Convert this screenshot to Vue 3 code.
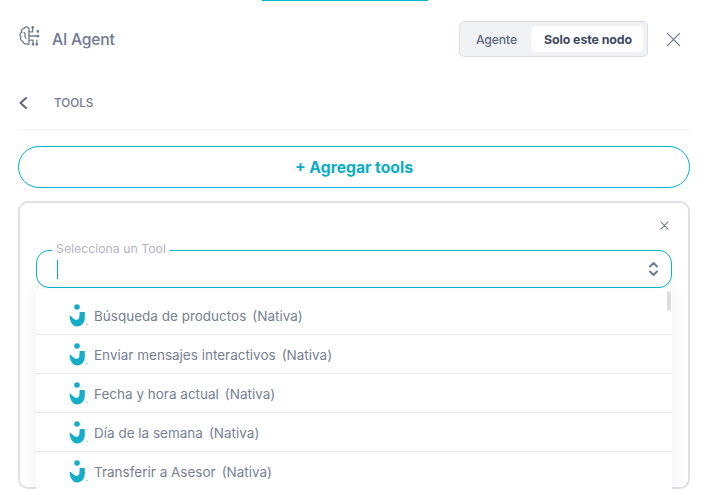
<template>
  <div class="panel">
    <div class="top-strip"></div>

    <header class="header">
      <div class="title-wrap">
        <svg class="brain" viewBox="0 0 24 24" fill="none" stroke="#6f7a90" stroke-width="1.4" stroke-linecap="round" stroke-linejoin="round">
          <path d="M11.5 3.2C10 1.2 7 1.8 6.5 4 4.4 4 3.3 6 4.1 7.8 1.9 8.9 1.5 11.8 3.2 13.2 2.2 15.3 3.3 17.5 5.4 17.8 5.6 20.2 8 21.4 9.8 20.4 10.6 21.6 11.6 21.4 12 20.6V3.6Z" />
          <path d="M6.5 8c1.2.8 1.6 2 1.1 3.4-.4 1.2.1 2.4 1.2 3" />
          <path d="M12 7.5h4V3.6M12 12h8.5M12 16.5h4.5v3.4M20.5 16.5v3.4" />
          <circle cx="16" cy="2.6" r=".8" />
          <circle cx="21.5" cy="7" r=".8" />
          <circle cx="21.8" cy="12" r=".8" />
          <circle cx="16.5" cy="21" r=".8" />
          <circle cx="20.5" cy="21" r=".8" />
        </svg>
        <span class="title">AI Agent</span>
      </div>
      <div class="header-right">
        <div class="switch">
          <button class="switch-btn">Agente</button>
          <button class="switch-btn active">Solo este nodo</button>
        </div>
        <svg class="close" viewBox="0 0 16 16" fill="none" stroke="#6f7a90" stroke-width="1.3" stroke-linecap="round">
          <path d="M1.5 1.5l13 13M14.5 1.5l-13 13" />
        </svg>
      </div>
    </header>

    <div class="section-row">
      <svg class="back" viewBox="0 0 10 14" fill="none" stroke="#5d6880" stroke-width="2" stroke-linecap="round" stroke-linejoin="round">
        <path d="M8 2L2.5 7 8 12" />
      </svg>
      <span class="section-name">TOOLS</span>
    </div>

    <button class="add-btn">+ Agregar tools</button>

    <div class="card">
      <div class="card-top">
        <svg class="card-close" viewBox="0 0 10 10" fill="none" stroke="#6f7a90" stroke-width="1.2" stroke-linecap="round">
          <path d="M1 1l8 8M9 1l-8 8" />
        </svg>
      </div>

      <div class="select">
        <span class="select-label">Selecciona un Tool</span>
        <span class="caret"></span>
        <svg class="updown" viewBox="0 0 10 16" fill="none" stroke="#6f7a90" stroke-width="2" stroke-linecap="round" stroke-linejoin="round">
          <path d="M1.5 5.5L5 2l3.5 3.5M1.5 10.5L5 14l3.5-3.5" />
        </svg>
      </div>

      <ul class="menu">
        <li v-for="tool in tools" :key="tool" class="menu-item">
          <svg class="logo" viewBox="0 0 20 23">
            <circle cx="8" cy="3" r="2.8" fill="#14aecb" />
            <path d="M.6 11.500C2 12 3.500 13.500 4.500 14.500 6 16 8 16 9.200 15.200 10.500 14.300 10.600 12.500 10.600 8H15.800V13.500C15.800 19 12.500 22.500 8.200 22.500 3.500 22.500 .6 17.500 .6 11.500Z" fill="#14aecb" />
            <circle cx="18" cy="20.500" r=".8" fill="#7fd3e2" />
          </svg>
          <span class="tool-name">{{ tool }}</span>
          <span class="tool-tag">(Nativa)</span>
        </li>
        <div class="scroll-thumb"></div>
      </ul>
    </div>
  </div>
</template>

<script setup>
const tools = [
  'Búsqueda de productos',
  'Enviar mensajes interactivos',
  'Fecha y hora actual',
  'Día de la semana',
  'Transferir a Asesor',
]
</script>

<style scoped>
.panel {
  position: relative;
  height: 489px;
  box-sizing: border-box;
  padding: 0 18px;
  overflow: hidden;
  background: #fff;
  font-family: Inter, "Noto Sans", sans-serif;
}

.top-strip {
  position: absolute;
  top: 0;
  left: 262px;
  width: 166px;
  height: 1px;
  background: #00b5cc;
}

.header {
  display: flex;
  align-items: center;
  justify-content: space-between;
  height: 36px;
  padding-top: 21px;
}

.title-wrap {
  display: flex;
  align-items: center;
  gap: 12px;
}

.brain {
  width: 22px;
  height: 24px;
  margin-top: -7px;
}

.title {
  color: #6f7a90;
  font-size: 15.700px;
  font-weight: 500;
  letter-spacing: -0.2px;
}

.header-right {
  display: flex;
  align-items: center;
  gap: 18px;
  margin-right: 9px;
}

.switch {
  display: flex;
  align-items: center;
  box-sizing: border-box;
  height: 36px;
  padding: 4px;
  background: #f1f2f6;
  border: 1px solid #dcdee4;
  border-radius: 5px;
}

.switch-btn {
  height: 26px;
  border: none;
  border-radius: 5px;
  background: transparent;
  color: #5d6880;
  font-family: inherit;
  font-size: 12.200px;
  font-weight: 500;
  padding: 0 2px 0 0;
  width: 67px;
  letter-spacing: -0.1px;
}

.switch-btn.active {
  width: 112px;
  padding: 0 0 0 2px;
  background: #fff;
  color: #3f4a63;
  font-size: 12.400px;
  font-weight: 700;
}

.close {
  width: 15px;
  height: 15px;
}

.section-row {
  display: flex;
  align-items: center;
  height: 34px;
  margin-top: 29px;
  padding-bottom: 9px;
  border-bottom: 1px solid #eef0f3;
  box-sizing: content-box;
}

.back {
  width: 10px;
  height: 14px;
  margin-right: 26px;
}

.section-name {
  color: #6f7a90;
  font-size: 11.700px;
  font-weight: 500;
}

.add-btn {
  display: block;
  width: 100%;
  height: 42px;
  margin-top: 16px;
  background: #fff;
  border: 1px solid #00b5cc;
  border-radius: 21px;
  color: #08aec6;
  font-family: inherit;
  font-size: 15.700px;
  font-weight: 700;
}

.card {
  position: relative;
  box-sizing: border-box;
  height: 288px;
  margin-top: 13px;
  padding: 0 16px;
  border: 2px solid #e0e1e7;
  border-radius: 10px;
}

.card-top {
  display: flex;
  justify-content: flex-end;
  height: 47px;
  padding: 18px 3px 0 0;
  box-sizing: border-box;
}

.card-close {
  width: 9px;
  height: 9px;
}

.select {
  position: relative;
  display: flex;
  align-items: center;
  justify-content: space-between;
  box-sizing: border-box;
  height: 38px;
  padding: 0 12px 0 20px;
  border: 1px solid #00b5cc;
  border-radius: 13px;
}

.select-label {
  position: absolute;
  top: -10px;
  left: 15px;
  padding: 0 4px;
  background: #fff;
  color: #b5b4c6;
  font-size: 12.300px;
  line-height: 15px;
}

.caret {
  width: 1px;
  height: 19px;
  background: #00a9c1;
}

.updown {
  width: 11px;
  height: 16px;
}

.menu {
  position: absolute;
  top: 86px;
  left: 16px;
  right: 16px;
  margin: 0;
  padding: 7px 0 0;
  list-style: none;
  background: #fff;
  box-shadow: 0 2px 14px rgba(60, 60, 90, 0.09);
}

.menu-item {
  display: flex;
  align-items: center;
  box-sizing: border-box;
  height: 39px;
  padding: 1px 0 0 33px;
  border-bottom: 1px solid #e8e9f0;
  color: #767f93;
  font-size: 13.500px;
}

.logo {
  width: 20px;
  height: 23px;
  margin-right: 5px;
}

.tool-tag {
  margin-left: 6px;
}

.scroll-thumb {
  position: absolute;
  top: 2px;
  right: 1px;
  width: 4px;
  height: 20px;
  border-radius: 2px;
  background: #dcdde3;
}
</style>
